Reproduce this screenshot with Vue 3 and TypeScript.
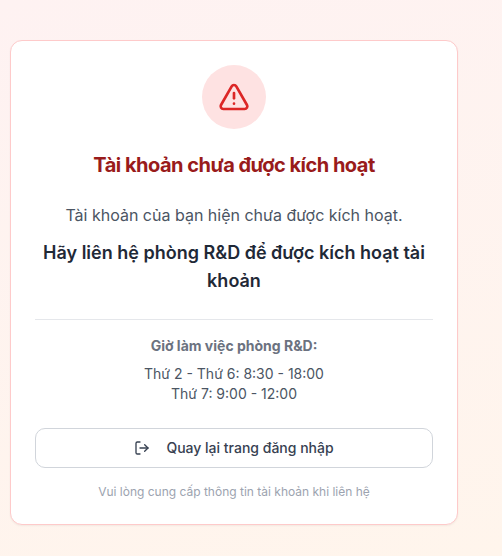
<script setup lang="ts">
interface WorkingHours {
  days: string
  hours: string
}

const schedule: WorkingHours[] = [
  { days: 'Thứ 2 - Thứ 6', hours: '8:30 - 18:00' },
  { days: 'Thứ 7', hours: '9:00 - 12:00' },
]
</script>

<template>
  <main class="page">
    <section class="card" aria-labelledby="title">
      <div class="badge">
        <svg class="warning" viewBox="0 0 24 24" aria-hidden="true">
          <path d="m21.73 18-8-14a2 2 0 0 0-3.48 0l-8 14A2 2 0 0 0 4 21h16a2 2 0 0 0 1.73-3" />
          <path d="M12 9v4" />
          <path d="M12 17h.01" />
        </svg>
      </div>
      <h1 id="title" class="title">Tài khoản chưa được kích hoạt</h1>
      <div class="message">
        <p class="lead">Tài khoản của bạn hiện chưa được kích hoạt.</p>
        <p class="action">Hãy liên hệ phòng R&amp;D để được kích hoạt tài khoản</p>
      </div>
      <div class="hours">
        <h2 class="hours-title">Giờ làm việc phòng R&amp;D:</h2>
        <p v-for="row in schedule" :key="row.days" class="hours-row">{{ row.days }}: {{ row.hours }}</p>
      </div>
      <button type="button" class="back">
        <svg class="logout" viewBox="0 0 24 24" aria-hidden="true">
          <path d="M9 21H5a2 2 0 0 1-2-2V5a2 2 0 0 1 2-2h4" />
          <path d="m16 17 5-5-5-5" />
          <path d="M21 12H9" />
        </svg>
        Quay lại trang đăng nhập
      </button>
      <p class="note">Vui lòng cung cấp thông tin tài khoản khi liên hệ</p>
    </section>
  </main>
</template>

<style>
body {
  background: #fff3ef;
}
</style>

<style scoped>
.page {
  box-sizing: border-box;
  min-height: 100vh;
  padding: 40px 44px 31px 10px;
  background: linear-gradient(165deg, #fef2f2, #fff5ec);
  font-family: Inter, sans-serif;
}

.card {
  box-sizing: border-box;
  max-width: 448px;
  margin: 0 auto;
  padding: 24px;
  border: 1px solid #fecaca;
  border-radius: 12px;
  background: #fff;
  box-shadow: 0 1px 2px rgb(0 0 0 / 5%);
  text-align: center;
}

h1,
h2,
p {
  margin: 0;
}

svg {
  fill: none;
  stroke: currentColor;
  stroke-width: 2;
  stroke-linecap: round;
  stroke-linejoin: round;
}

.badge {
  display: flex;
  align-items: center;
  justify-content: center;
  width: 64px;
  height: 64px;
  margin: 0 auto 20px;
  border-radius: 50%;
  background: #fee2e2;
  color: #dc2626;
}

.warning {
  width: 32px;
  height: 32px;
}

.title {
  color: #991b1b;
  font-size: 20px;
  font-weight: 700;
  line-height: 32px;
  letter-spacing: -0.025em;
}

.message {
  padding: 20px 0 24px;
}

.lead {
  margin-bottom: 10px;
  color: #4b5563;
  font-size: 16px;
  line-height: 28px;
}

.action {
  color: #1f2937;
  font-size: 18px;
  font-weight: 600;
  line-height: 28px;
}

.hours {
  padding: 16px 0 24px;
  border-top: 1px solid #e5e7eb;
  color: #4b5563;
  font-size: 14px;
  line-height: 20px;
}

.hours-title {
  margin-bottom: 8px;
  color: #6b7280;
  font-size: 14px;
  font-weight: 700;
  line-height: 20px;
}

.back {
  box-sizing: border-box;
  display: flex;
  align-items: center;
  justify-content: center;
  gap: 16px;
  width: 100%;
  height: 40px;
  margin-bottom: 16px;
  padding: 8px 16px;
  border: 1px solid #d1d5db;
  border-radius: 10px;
  background: #fff;
  color: #374151;
  font: 500 14px/20px Inter, sans-serif;
  cursor: pointer;
}

.logout {
  width: 16px;
  height: 16px;
}

.note {
  color: #9ca3af;
  font-size: 12px;
  line-height: 16px;
}
</style>
